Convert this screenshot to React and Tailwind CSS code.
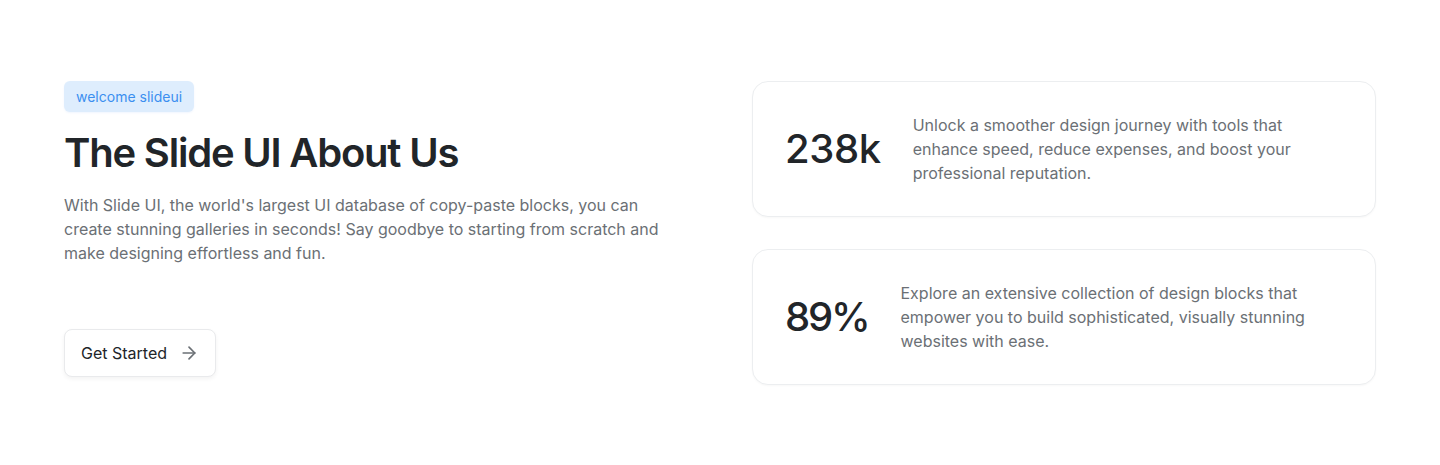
const stats = [
  {
    value: '238k',
    tracking: 'tracking-[-0.01em]',
    text: 'Unlock a smoother design journey with tools that enhance speed, reduce expenses, and boost your professional reputation.',
  },
  {
    value: '89%',
    tracking: 'tracking-[-0.055em]',
    text: 'Explore an extensive collection of design blocks that empower you to build sophisticated, visually stunning websites with ease.',
  },
]

function ArrowRight() {
  return (
    <svg width="20" height="20" viewBox="0 0 24 24" fill="none" stroke="currentColor" strokeWidth="2" strokeLinecap="round" strokeLinejoin="round">
      <path d="M5 12h14" />
      <path d="m12 5 7 7-7 7" />
    </svg>
  )
}

export default function App() {
  return (
    <div className="min-h-[465px] bg-white font-['Inter',sans-serif]">
      <section className="grid grid-cols-2 gap-16 px-16 pt-[81px] pb-20">
        <div className="flex flex-col items-start">
          <span className="rounded-md bg-[#deedfd] px-3 py-[6px] text-sm leading-[19px] text-[#3b8ff0] shadow-[0_1px_2px_rgba(59,130,246,0.08)]">
            welcome slideui
          </span>
          <h1 className="mt-[17px] text-[40px] font-semibold leading-[48px] tracking-[-0.03em] text-[#212529]">
            The Slide UI About Us
          </h1>
          <p className="mt-4 max-w-[600px] text-base leading-6 text-[#6b7075]">
            With Slide UI, the world's largest UI database of copy-paste blocks, you can create stunning galleries in seconds! Say goodbye to starting from scratch and make designing effortless and fun.
          </p>
          <button className="mt-16 flex h-12 items-center gap-3 rounded-lg border border-[#e9eaec] bg-white px-4 text-base text-[#212529] shadow-[0_2px_4px_rgba(0,0,0,0.05)]">
            Get Started
            <span className="text-[#6b7075]">
              <ArrowRight />
            </span>
          </button>
        </div>

        <div className="flex flex-col gap-8">
          {stats.map((s) => (
            <div
              key={s.value}
              className="flex items-center gap-8 rounded-2xl border border-[#eceef0] bg-white px-8 py-[31px] shadow-[0_1px_2px_rgba(0,0,0,0.03)]"
            >
              <div className={`text-[40px] font-medium leading-none text-[#212529] ${s.tracking}`}>{s.value}</div>
              <p className="flex-1 text-base leading-6 text-[#6b7075]">{s.text}</p>
            </div>
          ))}
        </div>
      </section>
    </div>
  )
}
